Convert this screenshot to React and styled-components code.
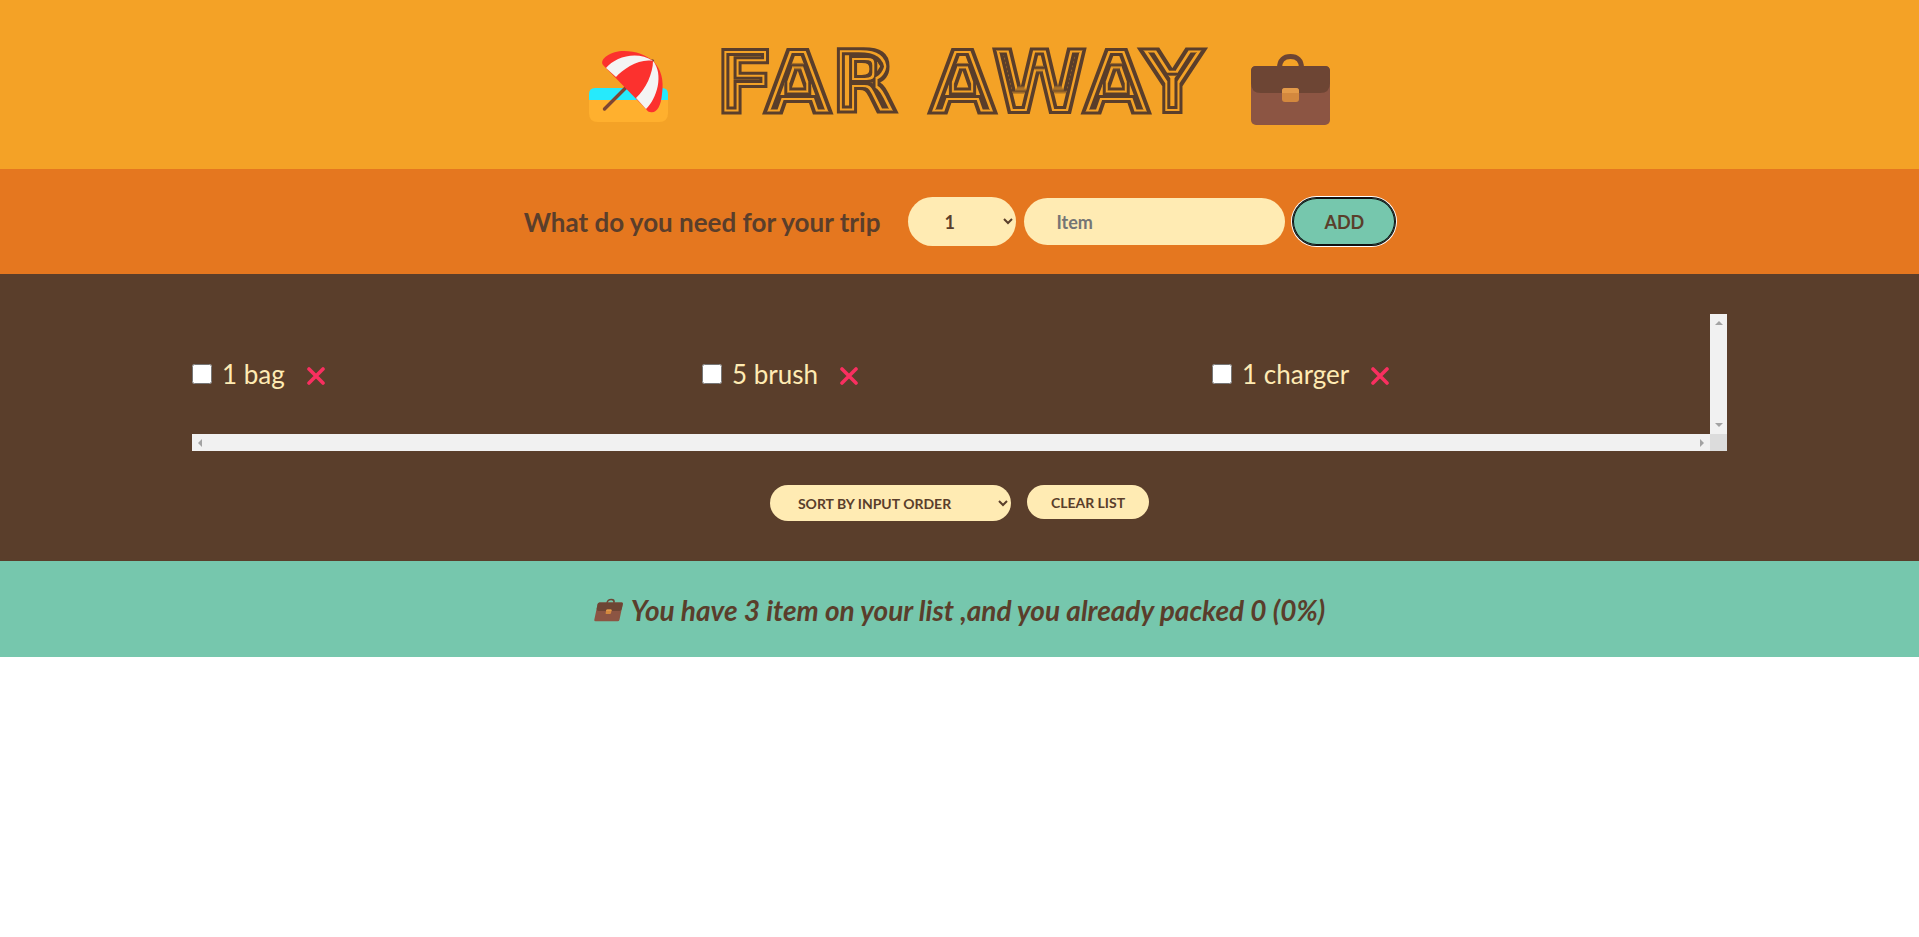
import React, { useState } from "react";
import styled, { createGlobalStyle } from "styled-components";

const colors = {
  sun: "#f4a226",
  orange: "#e5771f",
  brown: "#5a3e2b",
  cream: "#ffebb3",
  mint: "#76c7ad",
};

const GlobalStyle = createGlobalStyle`
  * { box-sizing: border-box; margin: 0; padding: 0; }
  body {
    font-family: Lato, "Open Sans", sans-serif;
    font-size: 26px;
    line-height: 32px;
    color: ${colors.brown};
    background: #fff;
  }
`;

const Header = styled.header`
  display: flex;
  align-items: center;
  justify-content: center;
  gap: 48px;
  padding: 32px 0;
  background: ${colors.sun};
`;

const Title = styled.h1`
  display: flex;
  gap: 32px;
  padding-bottom: 5px;
  font-family: "DejaVu Sans", sans-serif;
  font-size: 86px;
  font-weight: 700;
  line-height: 100px;
  text-transform: uppercase;
  -webkit-text-stroke: 4px ${colors.brown};
  filter: url(#engraved);
`;

const Form = styled.form`
  display: flex;
  align-items: center;
  justify-content: center;
  gap: 8px;
  padding: 28px 0;
  background: ${colors.orange};
`;

const Prompt = styled.h3`
  margin-right: 20px;
  font-size: 26px;
  font-weight: 700;
`;

const pill = `
  border: 0;
  border-radius: 100px;
  background-color: ${colors.cream};
  color: ${colors.brown};
  font-family: inherit;
  font-weight: 700;
`;

const Quantity = styled.select`
  ${pill}
  width: 108px;
  height: 49px;
  padding: 12px 32px;
  font-size: 18px;
`;

const ItemInput = styled.input`
  ${pill}
  width: 261px;
  height: 47px;
  padding: 12px 32px;
  font-size: 18px;
  &::placeholder { color: #757575; }
`;

const AddButton = styled.button`
  ${pill}
  height: 47px;
  padding: 0 31px;
  font-size: 18px;
  text-transform: uppercase;
  background-color: ${colors.mint};
  box-shadow: inset 0 0 0 1px #101010, 0 0 0 1px #101010, 0 0 0 2px #fff;
`;

const ListSection = styled.main`
  display: flex;
  flex-direction: column;
  align-items: center;
  gap: 34px;
  padding: 40px 0;
  background: ${colors.brown};
  color: ${colors.cream};
`;

const ScrollFrame = styled.div`
  display: grid;
  grid-template-columns: 1fr 17px;
  grid-template-rows: 120px 17px;
  width: 80%;
`;

const Items = styled.ul`
  display: grid;
  grid-template-columns: repeat(auto-fit, minmax(250px, 1fr));
  gap: 12px;
  align-items: center;
  list-style: none;
  overflow: hidden;
`;

const Item = styled.li`
  display: flex;
  align-items: center;
  gap: 14px;
`;

const ItemLabel = styled.label`
  display: flex;
  align-items: center;
  gap: 10px;
  text-decoration: ${(p) => (p.$packed ? "line-through" : "none")};
`;

const Check = styled.input`
  width: 20px;
  height: 20px;
`;

const Remove = styled.button`
  display: flex;
  padding: 12px 8px 8px;
  border: 0;
  background: none;
  cursor: pointer;
`;

const Track = styled.div`
  display: flex;
  flex-direction: ${(p) => (p.$vertical ? "column" : "row")};
  align-items: center;
  justify-content: space-between;
  padding: ${(p) => (p.$vertical ? "7px 0" : "0 6px")};
  background: #f1f1f1;
`;

const Corner = styled.div`
  background: #dcdcdc;
`;

const Actions = styled.div`
  display: flex;
  align-items: flex-start;
  gap: 16px;
`;

const SortSelect = styled.select`
  ${pill}
  width: 241px;
  height: 36px;
  padding: 8px 24px;
  font-size: 14px;
  text-transform: uppercase;
`;

const ClearButton = styled.button`
  ${pill}
  height: 34px;
  padding: 0 24px;
  font-size: 14px;
  text-transform: uppercase;
`;

const Stats = styled.footer`
  display: flex;
  align-items: center;
  justify-content: center;
  gap: 8px;
  padding: 33px 0 31px;
  background: ${colors.mint};
  font-size: 28px;
  font-weight: 700;
  font-style: italic;
`;

const FilterDefs = styled.svg`
  display: block;
`;

const LineFilter = () => (
  <FilterDefs width="0" height="0" aria-hidden="true">
    <filter id="engraved" x="-2%" y="-5%" width="104%" height="110%" colorInterpolationFilters="sRGB">
      <feMorphology in="SourceGraphic" operator="erode" radius="3" result="e1" />
      <feMorphology in="SourceGraphic" operator="erode" radius="5" result="e2" />
      <feMorphology in="SourceGraphic" operator="erode" radius="8" result="e3" />
      <feComposite in="SourceGraphic" in2="e1" operator="out" result="outer" />
      <feComposite in="e2" in2="e3" operator="out" result="inner" />
      <feMerge>
        <feMergeNode in="outer" />
        <feMergeNode in="inner" />
      </feMerge>
    </filter>
  </FilterDefs>
);

const BeachIcon = () => (
  <svg width="79" height="80" viewBox="0 -6 79 80" aria-hidden="true">
    <path d="M0 48h79v14q0 9-9 9H9q-9 0-9-9z" fill="#ffb02e" />
    <path d="M0 49v-6q0-6 6-6h67q6 0 6 6v6z" fill="#26eafc" />
    <path d="M15.500 58 63.500 10" stroke="#7d4533" strokeWidth="3.400" strokeLinecap="round" />
    <path d="M14 14C10 8 22 0 35 0c12 0 22 4 29 10 8 8 11 18 9 33-1 13-6 20-12 18-2 0-3-2-4-3z" fill="#fc312e" />
    <path d="M17 17C26 6 48-1 64 10 51 7 34 18 27 26z" fill="#f4f4f4" />
    <path d="M64 10c11 13 4 38-7 48L47 47c10-9 17-25 17-37z" fill="#f4f4f4" />
  </svg>
);

const CaseIcon = ({ width, height, slanted }) => (
  <svg width={width} height={height} viewBox={slanted ? "-2 -2 91 75" : "0 -9 79 80"} aria-hidden="true">
    <g transform={slanted ? "translate(13 0) skewX(-12)" : undefined}>
      <path d="M28.500 14C28.500 6 33 2.500 39.500 2.500S50.500 6 50.500 14" fill="none" stroke="#6d4534" strokeWidth="5" />
      <rect y="12" width="79" height="59" rx="5" fill="#8c5543" />
      <path d="M5 12h69q5 0 5 5v12q0 10-10 10H10Q0 39 0 29V17q0-5 5-5z" fill="#6d4534" />
      <rect x="31" y="34" width="17" height="14" rx="3" fill="#d3883e" />
      <path d="M31 39v-2q0-3 3-3h11q3 0 3 3v2z" fill="#e39a49" />
    </g>
  </svg>
);

const CrossIcon = () => (
  <svg width="18" height="18" viewBox="0 0 18 18" aria-hidden="true">
    <path d="M2 2l14 14M16 2L2 16" stroke="#f92f60" strokeWidth="3.600" strokeLinecap="round" />
  </svg>
);

const arrows = {
  up: "M0 4h8L4 0z",
  down: "M0 0h8L4 4z",
  left: "M4 0v8L0 4z",
  right: "M0 0v8l4-4z",
};

const Arrow = ({ dir }) => {
  const tall = dir === "left" || dir === "right";
  return (
    <svg width={tall ? 4 : 8} height={tall ? 8 : 4} aria-hidden="true">
      <path d={arrows[dir]} fill="#a3a3a3" />
    </svg>
  );
};

const initialItems = [
  { id: 1, quantity: 1, name: "bag", packed: false },
  { id: 2, quantity: 5, name: "brush", packed: false },
  { id: 3, quantity: 1, name: "charger", packed: false },
];

export default function App() {
  const [items, setItems] = useState(initialItems);
  const [name, setName] = useState("");
  const [quantity, setQuantity] = useState(1);

  const packed = items.filter((i) => i.packed).length;
  const percent = items.length ? Math.round((packed / items.length) * 100) : 0;

  const addItem = (e) => {
    e.preventDefault();
    if (!name) return;
    setItems([...items, { id: Date.now(), quantity, name, packed: false }]);
    setName("");
    setQuantity(1);
  };

  const toggle = (id) =>
    setItems(items.map((i) => (i.id === id ? { ...i, packed: !i.packed } : i)));

  return (
    <>
      <GlobalStyle />
      <LineFilter />
      <Header>
        <BeachIcon />
        <Title>
          <span>Far</span> <span>Away</span>
        </Title>
        <CaseIcon width={79} height={80} />
      </Header>

      <Form onSubmit={addItem}>
        <Prompt>What do you need for your trip</Prompt>
        <Quantity aria-label="Quantity" value={quantity} onChange={(e) => setQuantity(Number(e.target.value))}>
          {Array.from({ length: 20 }, (_, i) => (
            <option key={i} value={i + 1}>{i + 1}</option>
          ))}
        </Quantity>
        <ItemInput aria-label="Item" placeholder="Item" value={name} onChange={(e) => setName(e.target.value)} />
        <AddButton>Add</AddButton>
      </Form>

      <ListSection>
        <ScrollFrame>
          <Items>
            {items.map((item) => (
              <Item key={item.id}>
                <ItemLabel $packed={item.packed}>
                  <Check type="checkbox" checked={item.packed} onChange={() => toggle(item.id)} />
                  {item.quantity} {item.name}
                </ItemLabel>
                <Remove type="button" aria-label={`Remove ${item.name}`} onClick={() => setItems(items.filter((i) => i.id !== item.id))}>
                  <CrossIcon />
                </Remove>
              </Item>
            ))}
          </Items>
          <Track $vertical>
            <Arrow dir="up" />
            <Arrow dir="down" />
          </Track>
          <Track>
            <Arrow dir="left" />
            <Arrow dir="right" />
          </Track>
          <Corner />
        </ScrollFrame>
        <Actions>
          <SortSelect aria-label="Sort items">
            <option>Sort by input order</option>
            <option>Sort by description</option>
            <option>Sort by packed status</option>
          </SortSelect>
          <ClearButton type="button" onClick={() => setItems([])}>Clear list</ClearButton>
        </Actions>
      </ListSection>

      <Stats>
        <CaseIcon width={29} height={24} slanted />
        <span>You have {items.length} item on your list ,and you already packed {packed} ({percent}%)</span>
      </Stats>
    </>
  );
}
